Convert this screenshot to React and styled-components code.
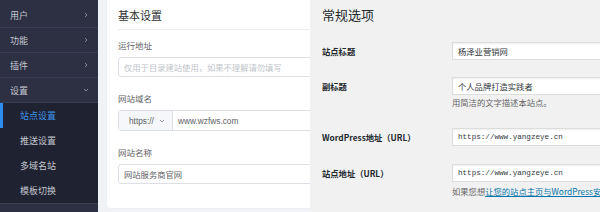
import React from 'react';
import styled, {createGlobalStyle} from 'styled-components';

const GlobalStyle = createGlobalStyle`
  html, body {
    margin: 0;
    padding: 0;
    width: 600px;
    height: 212px;
    overflow: hidden;
    background: #f0f2f5;
  }
  * { box-sizing: border-box; }
`
const cjk = `"Noto Sans CJK SC", "Liberation Sans", sans-serif`;

const Page = styled.div`
  display: flex;
  width: 600px;
  height: 212px;
  font-family: ${cjk};
`
//sidebar
const Sidebar = styled.div`
  flex: 0 0 98px;
  background: #2c3042;
  padding-top: 3px;
  display: flex;
  flex-direction: column;
`
const MenuItem = styled.div`
  display: flex;
  align-items: center;
  justify-content: space-between;
  height: 25px;
  padding: 0 9px 0 10px;
  border-bottom: 1px solid #383d52;
  color: #c3c6cf;
  font-size: 9px;
`
const SubMenu = styled.div`
  background: #1f2230;
  display: flex;
  flex-direction: column;
  border-bottom: 1px solid #3a3f55;
`
const SubItem = styled.div`
  position: relative;
  display: flex;
  align-items: center;
  height: 25px;
  padding-left: 20px;
  font-size: 9px;
  color: ${props => props.$active ? '#3d93ea' : '#c3c6cf'};
  &::before {
    content: '';
    display: ${props => props.$active ? 'block' : 'none'};
    position: absolute;
    left: 0;
    top: 0;
    bottom: 0;
    width: 3px;
    background: #2d8cf0;
  }
`
//middle
const Main = styled.div`
  flex: 0 0 212px;
  overflow: hidden;
  padding-left: 8px;
  background: #f0f2f5;
`
const Card = styled.div`
  width: 300px;
  height: 209px;
  background: #fff;
  border-radius: 0 0 4px 4px;
  border: 1px solid #ebeef5;
  border-top: none;
  padding: 0 0 0 11px;
`
const CardHead = styled.div`
  height: 30px;
  line-height: 30px;
  font-size: 11px;
  color: #303133;
  border-bottom: 1px solid #ebeef5;
`
const Form = styled.div`
  display: flex;
  flex-direction: column;
  gap: 13px;
  padding-top: 7px;
`
const Item = styled.div`
  display: flex;
  flex-direction: column;
  gap: 4px;
`
const Label = styled.div`
  height: 16px;
  line-height: 16px;
  font-size: 8.5px;
  color: #606266;
`
const Input = styled.div`
  display: flex;
  align-items: center;
  height: 20px;
  border: 1px solid #dcdfe6;
  border-radius: 3px;
  padding-left: 5px;
  font-size: 8.3px;
  color: ${props => props.$placeholder ? '#c0c4cc' : '#606266'};
  white-space: nowrap;
`
const Group = styled.div`
  display: flex;
  height: 21px;
  border: 1px solid #dcdfe6;
  border-radius: 3px;
  font-size: 8.3px;
  color: #606266;
  white-space: nowrap;
`
const Prefix = styled.div`
  flex: 0 0 54px;
  display: flex;
  align-items: center;
  justify-content: space-between;
  padding: 0 7px 0 10px;
  background: #f5f7fa;
  border-right: 1px solid #dcdfe6;
  font-family: "Liberation Sans", sans-serif;
`
const GroupText = styled.div`
  display: flex;
  align-items: center;
  padding-left: 5px;
  font-family: "Liberation Sans", sans-serif;
`
//right panel
const Panel = styled.div`
  flex: 0 0 290px;
  overflow: hidden;
  background: #f1f1f1;
  padding-left: 12px;
  color: #23282d;
`
const Title = styled.div`
  height: 30px;
  line-height: 30px;
  font-size: 13px;
  font-weight: 400;
`
const Row = styled.div`
  display: flex;
  align-items: flex-start;
  margin-top: ${props => props.$mt}px;
`
const RowLabel = styled.div`
  flex: 0 0 130px;
  height: 18px;
  line-height: 18px;
  font-size: 8.3px;
  font-weight: 700;
  white-space: nowrap;
`
const Field = styled.div`
  display: flex;
  flex-direction: column;
`
const TextBox = styled.div`
  width: 220px;
  height: 18px;
  display: flex;
  align-items: center;
  padding-left: 5px;
  background: #fff;
  border: 1px solid #dddddd;
  box-shadow: inset 0 1px 2px rgba(0,0,0,.07);
  color: #32373c;
  white-space: nowrap;
  font-size: ${props => props.$mono ? '7.6px' : '8.3px'};
  font-family: ${props => props.$mono ? '"Liberation Mono", monospace' : cjk};
`
const Desc = styled.div`
  margin-top: ${props => props.$mt}px;
  height: 12px;
  line-height: 12px;
  font-size: 8.3px;
  color: #666;
  white-space: nowrap;
  a {
    color: #0073aa;
    text-decoration: underline;
  }
`

const Chevron = ({down}) => (
  <svg width="6" height="6" viewBox="0 0 6 6" fill="none" stroke="#8a8fa2" strokeWidth="0.9">
    {down ? <path d="M1 2l2 2 2-2" /> : <path d="M2 1l2 2-2 2" />}
  </svg>
);

const menus = ['用户', '功能', '插件'];
const subs = ['站点设置', '推送设置', '多域名站', '模板切换'];

export default function App(){
  return(
    <Page>
      <GlobalStyle />
      <Sidebar>
        {menus.map(m => (
          <MenuItem key={m}>{m}<Chevron /></MenuItem>
        ))}
        <MenuItem>设置<Chevron down /></MenuItem>
        <SubMenu>
          {subs.map((s, i) => (
            <SubItem key={s} $active={i === 0}>{s}</SubItem>
          ))}
        </SubMenu>
      </Sidebar>
      <Main>
        <Card>
          <CardHead>基本设置</CardHead>
          <Form>
            <Item>
              <Label>运行地址</Label>
              <Input $placeholder>仅用于目录建站使用，如果不理解请勿填写</Input>
            </Item>
            <Item>
              <Label>网站域名</Label>
              <Group>
                <Prefix>https://<Chevron down /></Prefix>
                <GroupText>www.wzfws.com</GroupText>
              </Group>
            </Item>
            <Item>
              <Label>网站名称</Label>
              <Input>网站服务商官网</Input>
            </Item>
          </Form>
        </Card>
      </Main>
      <Panel>
        <Title>常规选项</Title>
        <Row $mt={12}>
          <RowLabel>站点标题</RowLabel>
          <Field><TextBox>杨泽业营销网</TextBox></Field>
        </Row>
        <Row $mt={17}>
          <RowLabel>副标题</RowLabel>
          <Field>
            <TextBox>个人品牌打造实践者</TextBox>
            <Desc $mt={1}>用简洁的文字描述本站点。</Desc>
          </Field>
        </Row>
        <Row $mt={20}>
          <RowLabel>WordPress地址（URL）</RowLabel>
          <Field><TextBox $mono>https://www.yangzeye.cn</TextBox></Field>
        </Row>
        <Row $mt={18}>
          <RowLabel>站点地址（URL）</RowLabel>
          <Field>
            <TextBox $mono>https://www.yangzeye.cn</TextBox>
            <Desc $mt={3}>如果您想<a>让您的站点主页与WordPress安装目录不同</a></Desc>
          </Field>
        </Row>
      </Panel>
    </Page>
  )
}
